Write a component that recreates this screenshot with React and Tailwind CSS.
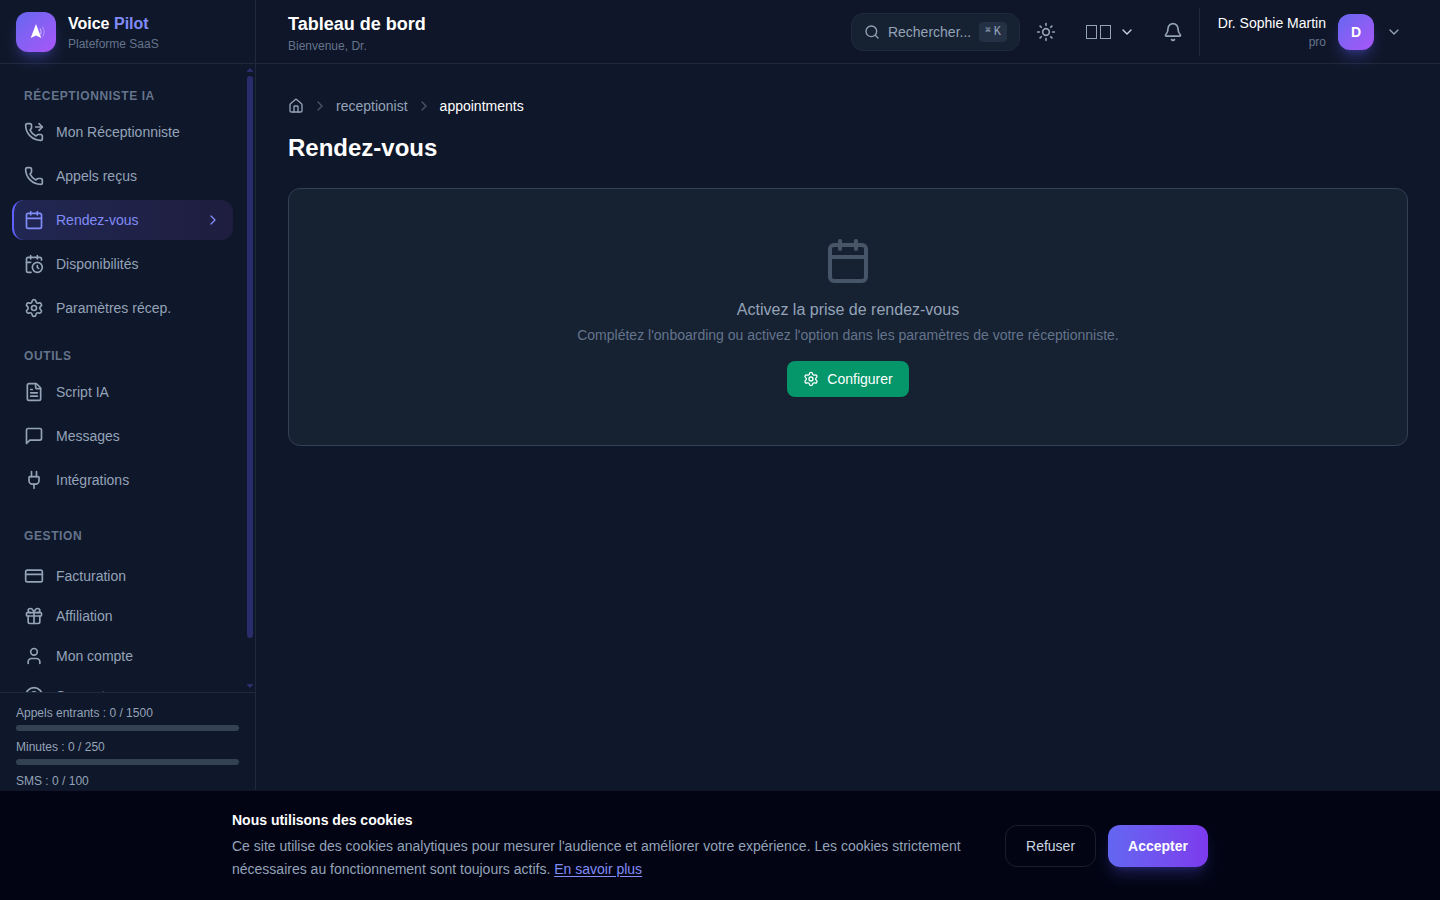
import React from 'react';
import {
  Bell,
  Calendar,
  CalendarClock,
  ChevronDown,
  ChevronRight,
  CircleQuestionMark,
  CreditCard,
  FileText,
  Gift,
  House,
  Phone,
  PhoneForwarded,
  Plug,
  Search,
  Settings,
  Sun,
  User,
} from 'lucide-react';

const MessageIcon = ({ className }) => (
  <svg
    className={className}
    viewBox="0 0 24 24"
    fill="none"
    stroke="currentColor"
    strokeWidth="2"
    strokeLinecap="round"
    strokeLinejoin="round"
    aria-hidden="true"
  >
    <path d="M21 15a2 2 0 0 1-2 2H7l-4 4V5a2 2 0 0 1 2-2h14a2 2 0 0 1 2 2z" />
  </svg>
);

const receptionItems = [
  { label: 'Mon Réceptionniste', icon: PhoneForwarded },
  { label: 'Appels reçus', icon: Phone },
  { label: 'Rendez-vous', icon: Calendar, active: true },
  { label: 'Disponibilités', icon: CalendarClock },
  { label: 'Paramètres récep.', icon: Settings },
];

const toolItems = [
  { label: 'Script IA', icon: FileText },
  { label: 'Messages', icon: MessageIcon },
  { label: 'Intégrations', icon: Plug },
];

const managementItems = [
  { label: 'Facturation', icon: CreditCard },
  { label: 'Affiliation', icon: Gift },
  { label: 'Mon compte', icon: User },
  { label: 'Support', icon: CircleQuestionMark },
];

const quotas = [
  { label: 'Appels entrants', used: 0, total: 1500 },
  { label: 'Minutes', used: 0, total: 250 },
  { label: 'SMS', used: 0, total: 100 },
];

const Logo = () => (
  <div className="w-10 h-10 rounded-xl bg-linear-to-br from-[#6366f1] to-[#a855f7] shadow-lg shadow-indigo-500/30 flex items-center justify-center">
    <svg className="w-5 h-5" viewBox="0 0 20 20" fill="none" aria-hidden="true">
      <path d="M10 2 L15.3 16 L10 13.4 L4.7 16 Z" fill="white" />
      <path d="M14 6.4 Q16 9.5 14.6 12.6" stroke="white" strokeOpacity="0.6" strokeWidth="1" />
      <path d="M16.6 4.6 Q19.8 9.5 17 14.6" stroke="white" strokeOpacity="0.35" strokeWidth="1" />
    </svg>
  </div>
);

const NavItem = ({ item }) => {
  const Icon = item.icon;
  return (
    <a
      href="#"
      aria-current={item.active ? 'page' : undefined}
      className={
        item.active
          ? 'flex items-center gap-3 h-10 pl-[10px] pr-3 rounded-xl border-l-2 border-indigo-500 bg-linear-to-r from-[#6366f1]/20 to-[#a855f7]/10 text-sm text-[#818cf8]'
          : 'flex items-center gap-3 h-10 px-3 rounded-xl text-sm text-[#94a3b8] hover:bg-white/5'
      }
    >
      <Icon className="w-5 h-5" />
      <span className="flex-1">{item.label}</span>
      {item.active && <ChevronRight className="w-4 h-4" />}
    </a>
  );
};

const SectionTitle = ({ children }) => (
  <h2 className="px-3 text-xs font-semibold uppercase tracking-wider text-[#64748b]">{children}</h2>
);

// Slim scroll track shown beside the navigation
const ScrollTrack = () => (
  <div aria-hidden="true" className="w-[10px] shrink-0 py-1 flex flex-col items-center gap-1 text-[#2a2d6b]">
    <svg className="w-[6px] h-1 shrink-0" viewBox="0 0 6 4" fill="currentColor">
      <path d="M0 4 L0 3 L3 0 L6 3 L6 4 Z" />
    </svg>
    <div className="flex-1 w-[6px]">
      <div className="h-[93%] rounded-full bg-[#2a2d6b]" />
    </div>
    <svg className="w-[6px] h-1 shrink-0" viewBox="0 0 6 4" fill="currentColor">
      <path d="M0 0 L0 1 L3 4 L6 1 L6 0 Z" />
    </svg>
  </div>
);

const Sidebar = () => (
  <aside className="w-64 shrink-0 flex flex-col border-r border-[#1e293b] bg-[#0f172a]">
    <div className="h-16 shrink-0 px-4 flex items-center gap-3 border-b border-[#1e293b]">
      <Logo />
      <div>
        <p className="text-base font-bold text-white">
          Voice <span className="text-[#818cf8]">Pilot</span>
        </p>
        <p className="text-xs text-[#64748b]">Plateforme SaaS</p>
      </div>
    </div>

    <div className="flex-1 min-h-0 flex">
      <nav className="flex-1 overflow-y-auto px-3 pt-6 pb-4 [scrollbar-width:none]">
        <div className="space-y-5">
          <div>
            <SectionTitle>Réceptionniste IA</SectionTitle>
            <div className="mt-2 space-y-1">
              {receptionItems.map((item) => (
                <NavItem key={item.label} item={item} />
              ))}
            </div>
          </div>
          <div>
            <SectionTitle>Outils</SectionTitle>
            <div className="mt-2 space-y-1">
              {toolItems.map((item) => (
                <NavItem key={item.label} item={item} />
              ))}
            </div>
          </div>
        </div>
        <div className="mt-7">
          <SectionTitle>Gestion</SectionTitle>
          <div className="mt-3">
            {managementItems.map((item) => (
              <NavItem key={item.label} item={item} />
            ))}
          </div>
        </div>
      </nav>
      <ScrollTrack />
    </div>

    {/* Usage quotas */}
    <div className="shrink-0 px-4 pt-3 pb-[101px] space-y-2 border-t border-[#1e293b]">
      {quotas.map((quota) => (
        <div key={quota.label}>
          <p className="text-xs text-[#94a3b8]">
            {quota.label} : {quota.used} / {quota.total}
          </p>
          <div className="mt-1 h-[6px] rounded-full bg-[#334155] overflow-hidden">
            <div
              className="h-full bg-indigo-500"
              style={{ width: `${(quota.used / quota.total) * 100}%` }}
            />
          </div>
        </div>
      ))}
    </div>
  </aside>
);

const Header = () => (
  <header className="h-16 shrink-0 px-8 flex items-center justify-between border-b border-[#1e293b] bg-[#0f1629]">
    <div className="pt-1">
      <h1 className="text-lg leading-6 font-semibold text-white">Tableau de bord</h1>
      <p className="text-xs leading-5 text-[#64748b]">Bienvenue, Dr.</p>
    </div>
    <div className="flex items-center">
      <button className="h-[38px] px-3 flex items-center gap-2 rounded-xl border border-[#1e293b] bg-[#162132] text-sm text-[#94a3b8]">
        <Search className="w-4 h-4" />
        <span>Rechercher...</span>
        <kbd className="h-5 px-[6px] flex items-center gap-[3px] rounded-sm bg-[#243044] text-xs font-['Liberation_Mono',monospace]">
          <span className="text-[9px] leading-3 pb-[2px]">⌘</span>K
        </kbd>
      </button>
      <button aria-label="Thème" className="ml-4 text-[#94a3b8]">
        <Sun className="w-5 h-5" />
      </button>
      <button aria-label="Langue" className="ml-[30px] flex items-center gap-2 text-[#cbd5e1]">
        <span className="flex gap-[3px]">
          <span className="w-[11px] h-[14px] border border-[#94a3b8]" />
          <span className="w-[11px] h-[14px] border border-[#94a3b8]" />
        </span>
        <ChevronDown className="w-4 h-4" />
      </button>
      <button aria-label="Notifications" className="ml-7 text-[#94a3b8]">
        <Bell className="w-5 h-5" />
      </button>
      <button className="ml-4 h-12 pl-[18px] pr-[6px] flex items-center gap-3 border-l border-[#1e293b]">
        <span className="text-right">
          <span className="block text-sm text-white">Dr. Sophie Martin</span>
          <span className="block text-xs leading-[18px] text-[#64748b]">pro</span>
        </span>
        <span className="w-9 h-9 flex items-center justify-center rounded-xl bg-linear-to-br from-[#6366f1] to-[#a855f7] shadow-lg shadow-indigo-500/30 text-sm font-semibold text-white">
          D
        </span>
        <ChevronDown className="w-4 h-4 text-[#94a3b8]" />
      </button>
    </div>
  </header>
);

const CookieBanner = () => (
  <section
    aria-label="Cookies"
    className="fixed inset-x-0 bottom-0 border-t border-[#10152a] bg-[#020414] pt-5 pb-[19px]"
  >
    <div className="max-w-5xl mx-auto px-6 flex items-center justify-between gap-6">
      <div className="max-w-[740px]">
        <p className="text-sm leading-[18px] font-semibold text-white">Nous utilisons des cookies</p>
        <p className="mt-[6px] text-sm leading-[23px] text-[#94a3b8]">
          Ce site utilise des cookies analytiques pour mesurer l'audience et améliorer votre
          expérience. Les cookies strictement nécessaires au fonctionnement sont toujours actifs.{' '}
          <a href="#" className="text-[#818cf8] underline underline-offset-2">En savoir plus</a>
        </p>
      </div>
      <div className="flex shrink-0 gap-3">
        <button className="h-[42px] px-5 rounded-xl border border-white/10 text-sm text-[#cbd5e1]">
          Refuser
        </button>
        <button className="h-[42px] px-5 rounded-xl bg-linear-to-r from-[#6366f1] to-[#7c3aed] shadow-lg shadow-indigo-500/25 text-sm font-semibold text-white">
          Accepter
        </button>
      </div>
    </div>
  </section>
);

const App = () => {
  return (
    <div className="h-screen flex bg-[#0f172a] font-['Liberation_Sans',sans-serif]">
      <Sidebar />
      <div className="flex-1 min-w-0 flex flex-col">
        <Header />
        <main className="flex-1 overflow-y-auto p-8">
          <nav aria-label="Fil d'Ariane" className="flex items-center gap-2 text-sm text-[#94a3b8]">
            <a href="#" aria-label="Accueil">
              <House className="w-4 h-4" />
            </a>
            <ChevronRight className="w-4 h-4 text-[#475569]" />
            <a href="#">receptionist</a>
            <ChevronRight className="w-4 h-4 text-[#475569]" />
            <span className="text-white">appointments</span>
          </nav>

          <h2 className="mt-4 text-2xl font-bold text-white">Rendez-vous</h2>

          <div className="mt-6 py-12 px-8 flex flex-col items-center rounded-xl border border-[#334155] bg-[#162132]">
            <Calendar className="w-12 h-12 text-[#475569]" />
            <p className="mt-3 text-base leading-[26px] text-[#94a3b8]">Activez la prise de rendez-vous</p>
            <p className="mt-[2px] text-sm text-[#64748b]">
              Complétez l'onboarding ou activez l'option dans les paramètres de votre réceptionniste.
            </p>
            <button className="mt-4 h-9 px-4 flex items-center gap-2 rounded-lg bg-[#059669] text-sm text-white">
              <Settings className="w-4 h-4" />
              Configurer
            </button>
          </div>
        </main>
      </div>
      <CookieBanner />
    </div>
  );
};

export default App;
